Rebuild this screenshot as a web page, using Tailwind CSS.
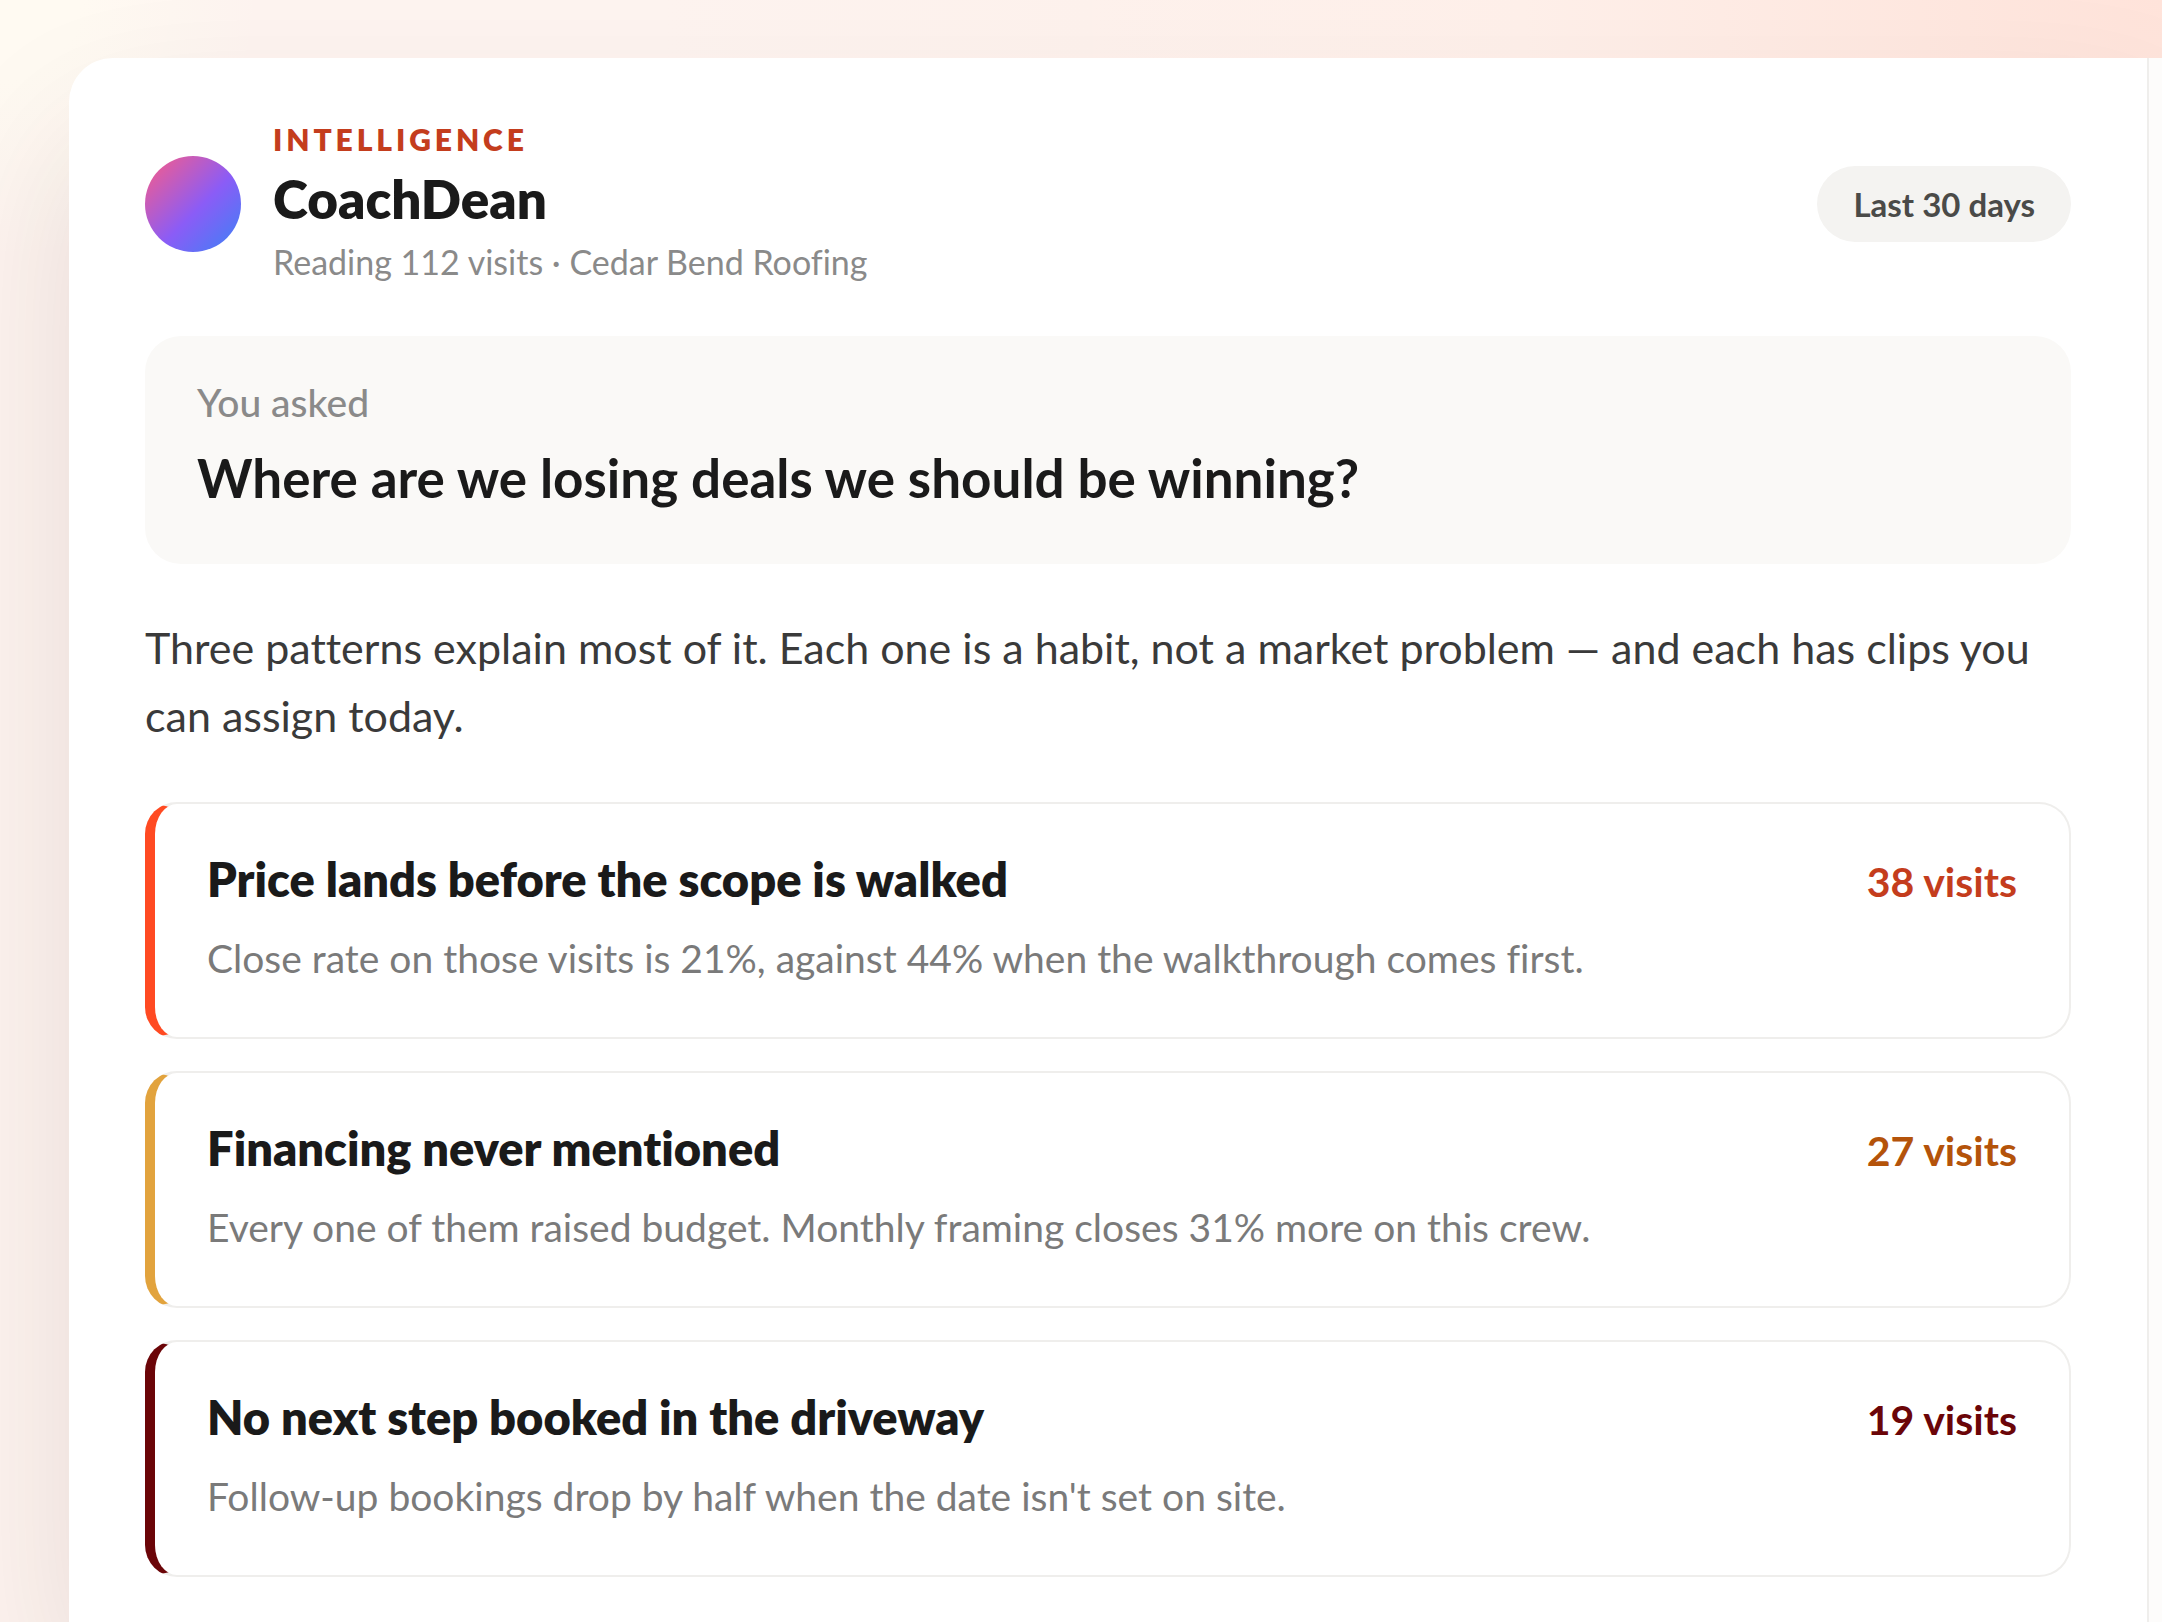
<!DOCTYPE html>
<html lang="en">
<head>
  <meta charset="UTF-8" />
  <meta name="viewport" content="width=device-width, initial-scale=1.0"/>
  <title>CoachDean - Intelligence</title>
  <script src="https://cdn.jsdelivr.net/npm/@tailwindcss/browser@4"></script>
</head>
<body class="h-screen overflow-hidden bg-[#fef4f0] bg-[radial-gradient(circle_at_0_0,#fffaf2_0px,#fffaf2_80px,transparent_260px),radial-gradient(circle_at_100%_0,#ffe3da_0px,#fff0ea_640px,transparent_1500px)] font-['Lato',sans-serif] text-[#1a1a1a] [font-variant-ligatures:none]">

  <div class="flex h-full pl-[69px] pt-[58px]">
    <div class="flex flex-1 rounded-tl-[44px] bg-white shadow-[0_80px_160px_rgba(60,35,25,0.12)]">

      <main class="flex-1 border-r-2 border-[#efeeec] px-[76px] pt-[62px]">

        <header class="flex items-center justify-between">
          <div class="flex items-center gap-8">
            <div class="size-24 rounded-full bg-[linear-gradient(135deg,#f25c8e_5%,#8b5cf6_55%,#3b82f6_100%)]"></div>
            <div class="pb-1">
              <p class="text-[30px] leading-[38px] font-extrabold tracking-[0.13em] text-[#c43d1d]">INTELLIGENCE</p>
              <h1 class="text-[53px] leading-[82px] font-extrabold">CoachDean</h1>
              <p class="text-[34px] leading-[44px] text-[#8a8a8a]">Reading 112 visits · Cedar Bend Roofing</p>
            </div>
          </div>
          <button type="button" class="rounded-full bg-[#f4f3f1] px-9 text-[33px] leading-[76px] font-bold text-[#4a4a48]">Last 30 days</button>
        </header>

        <section class="mt-12 rounded-[36px] bg-[#faf9f7] px-[52px] pt-10 pb-[52px]">
          <p class="text-[39px] leading-[52px] font-medium text-[#8a8a8a]">You asked</p>
          <h2 class="mt-4 text-[53px] leading-[68px] font-bold">Where are we losing deals we should be winning?</h2>
        </section>

        <p class="mt-[50px] text-[43px] leading-[68px] text-[#3a3a3a]">Three patterns explain most of it. Each one is a habit, not a market problem — and each has clips you can assign today.</p>

        <ul class="mt-[52px] space-y-8">
          <li class="rounded-[32px] border-2 border-l-[10px] border-[#efeeec] border-l-[#ff4a22] px-[52px] pt-[43px] pb-[49px]">
            <div class="flex items-baseline justify-between">
              <h3 class="text-[47px] leading-[64px] font-extrabold">Price lands before the scope is walked</h3>
              <span class="text-[41px] leading-[64px] font-bold text-[#c43d1d]">38 visits</span>
            </div>
            <p class="mt-3.5 text-[39px] leading-[60px] text-[#7a7a7a]">Close rate on those visits is 21%, against 44% when the walkthrough comes first.</p>
          </li>
          <li class="rounded-[32px] border-2 border-l-[10px] border-[#efeeec] border-l-[#e2a33d] px-[52px] pt-[43px] pb-[49px]">
            <div class="flex items-baseline justify-between">
              <h3 class="text-[47px] leading-[64px] font-extrabold">Financing never mentioned</h3>
              <span class="text-[41px] leading-[64px] font-bold text-[#b4530a]">27 visits</span>
            </div>
            <p class="mt-3.5 text-[39px] leading-[60px] text-[#7a7a7a]">Every one of them raised budget. Monthly framing closes 31% more on this crew.</p>
          </li>
          <li class="rounded-[32px] border-2 border-l-[10px] border-[#efeeec] border-l-[#6b0508] px-[52px] pt-[43px] pb-[49px]">
            <div class="flex items-baseline justify-between">
              <h3 class="text-[47px] leading-[64px] font-extrabold">No next step booked in the driveway</h3>
              <span class="text-[41px] leading-[64px] font-bold text-[#6b0508]">19 visits</span>
            </div>
            <p class="mt-3.5 text-[39px] leading-[60px] text-[#7a7a7a]">Follow-up bookings drop by half when the date isn't set on site.</p>
          </li>
        </ul>
      </main>

      <aside class="w-[13px] bg-[#fdfcfb]"></aside>
    </div>
  </div>
</body>
</html>
